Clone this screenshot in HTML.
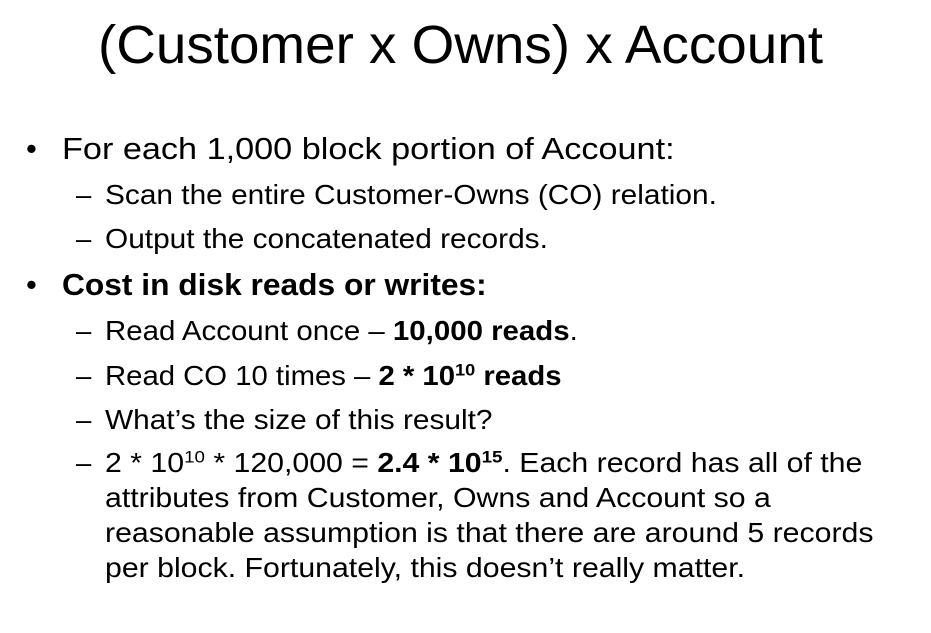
<!DOCTYPE html>
<html><head><meta charset="utf-8"><style>
html,body{margin:0;padding:0;background:#fff;}
body{width:931px;height:633px;position:relative;overflow:hidden;font-family:"Liberation Sans",sans-serif;color:#000;}
.l{position:absolute;white-space:nowrap;line-height:1;transform-origin:left center;}
.t{font-size:54px;transform:scaleX(1.015);}
.a{font-size:31px;transform:scaleX(1.104);}
.b{font-size:27.5px;transform:scaleX(1.085);}
.c{font-size:27.5px;transform:scaleX(1.1);}
.d{font-size:27.5px;}
sup{font-size:0.62em;line-height:0;vertical-align:0.55em;}
</style></head><body>
<div class="l t" style="left:98px;top:18px;">(Customer x Owns) x Account</div>

<div class="l a" style="left:26px;top:133px;transform:none">•</div>
<div class="l a" style="left:62px;top:133px;">For each 1,000 block portion of Account:</div>
<div class="l d" style="left:76px;top:181px;">–</div>
<div class="l b" style="left:105px;top:181px;">Scan the entire Customer-Owns (CO) relation.</div>
<div class="l d" style="left:76px;top:225px;">–</div>
<div class="l b" style="left:105px;top:225px;">Output the concatenated records.</div>

<div class="l a" style="left:26px;top:269px;transform:none">•</div>
<div class="l a" style="left:62px;top:269px;font-weight:bold;transform:scaleX(1.023)">Cost in disk reads or writes:</div>
<div class="l d" style="left:76px;top:317px;">–</div>
<div class="l b" style="left:105px;top:317px;transform:scaleX(1.07)">Read Account once – <b>10,000 reads</b>.</div>
<div class="l d" style="left:76px;top:362px;">–</div>
<div class="l b" style="left:105px;top:362px;transform:scaleX(1.065)">Read CO 10 times – <b>2 * 10<sup>10</sup> reads</b></div>
<div class="l d" style="left:76px;top:406px;">–</div>
<div class="l b" style="left:105px;top:406px;">What’s the size of this result?</div>
<div class="l d" style="left:76px;top:449px;">–</div>
<div class="l c" style="left:105px;top:449px;">2 * 10<sup>10</sup> * 120,000 = <b>2.4 * 10<sup>15</sup></b>. Each record has all of the</div>
<div class="l c" style="left:105px;top:484px;">attributes from Customer, Owns and Account so a</div>
<div class="l c" style="left:105px;top:519px;">reasonable assumption is that there are around 5 records</div>
<div class="l c" style="left:105px;top:554px;">per block. Fortunately, this doesn’t really matter.</div>
</body></html>
